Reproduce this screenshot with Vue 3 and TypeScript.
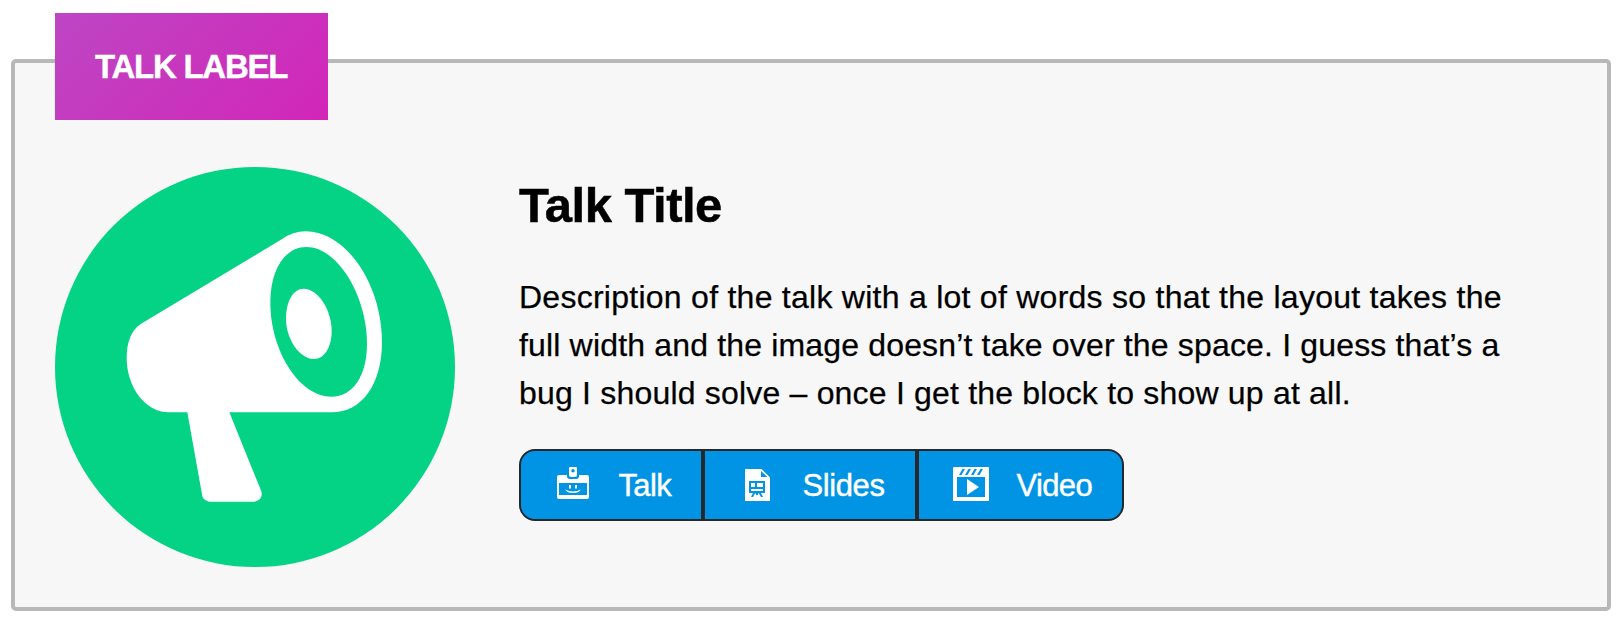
<script setup lang="ts">
const title = 'Talk Title'
const label = 'Talk Label'
const lines: string[] = [
  'Description of the talk with a lot of words so that the layout takes the',
  'full width and the image doesn’t take over the space. I guess that’s a',
  'bug I should solve – once I get the block to show up at all.',
]
</script>

<template>
  <article class="card">
    <div class="label"><span>{{ label }}</span></div>
    <div class="body">
      <svg class="avatar" viewBox="0 0 1200 1200" aria-hidden="true">
        <circle cx="600" cy="600" r="600" fill="#04d284" />
        <path
          fill="#fff"
          d="M257 471L680 217Q714 193 752 193C872 193 981 350 981 525C981 650 922 736 830 736H523L619 973Q625 999 599 1004H462Q442 1000 441 982L397 736H342C268 736 215 657 215 573Q215 500 257 471Z"
        />
        <path
          fill="#04d284"
          d="M754 240C850 240 936 390 936 530C936 625 894 689 829 689C734 689 646 555 646 405C646 308 690 240 754 240Z"
        />
        <path
          fill="#fff"
          d="M746 365C790 365 830 430 830 492C830 540 808 576 777 576C733 576 693 515 693 455C693 402 715 365 746 365Z"
        />
      </svg>
      <div class="content">
        <h2 class="title"><span>{{ title }}</span></h2>
        <p class="description">
          <span v-for="(line, i) in lines" :key="i" class="line" :class="`line-${i + 1}`">{{ line }}</span>
        </p>
        <nav class="links">
          <a class="link link-talk">
            <svg class="icon" viewBox="0 0 36 36" aria-hidden="true">
              <path
                fill="#fff"
                fill-rule="evenodd"
                d="M15 1H21Q22 1 22 2V9Q22 11 20 11H16Q14 11 14 9V2Q14 1 15 1ZM18 3A1.8 1.8 0 1 0 18 6.6A1.8 1.8 0 1 0 18 3ZM4 9H12V10Q12 13 15 13H21Q24 13 24 10V9H32Q34 9 34 11V31Q34 33 32 33H4Q2 33 2 31V11Q2 9 4 9ZM4 17V29H32V17Z"
              />
              <path fill="#fff" d="M14 19H16V22.5H14ZM20 19H22V22.5H20ZM10 23.5Q18 27.4 26 23.5Q24 27 18 27Q12 27 10 23.5Z" />
            </svg>
            <span>Talk</span>
          </a>
          <a class="link link-slides">
            <svg class="icon" viewBox="0 0 36 36" aria-hidden="true">
              <path fill="#fff" fill-rule="evenodd" d="M6 3H22.5L31 11.5V35H6ZM22 5V11H28.5Z" />
              <path
                fill="#0294e4"
                fill-rule="evenodd"
                d="M10 15H26V27H22L24 31H22L20 27.5H19V29H17V27.5H16L14 31H12L14 27H10ZM12 17V21H16V17ZM18 17V21H24V17ZM12 23V25H24V23Z"
              />
            </svg>
            <span>Slides</span>
          </a>
          <a class="link link-video">
            <svg class="icon" viewBox="0 0 36 36" aria-hidden="true">
              <path
                fill="#fff"
                fill-rule="evenodd"
                d="M1 1H35Q36 1 36 2V35H0V2Q0 1 1 1ZM4 11V31H32V11ZM6 9H8.5L12 3H9.5ZM12 9H14.5L18 3H15.5ZM18 9H20.5L24 3H21.5ZM24 9H26.5L30 3H27.5Z"
              />
              <path fill="#fff" d="M14 13L26 21L14 29Z" />
            </svg>
            <span>Video</span>
          </a>
        </nav>
      </div>
    </div>
  </article>
</template>

<style>
body {
  margin: 0;
  background: #fff;
}
</style>

<style scoped>
.card {
  box-sizing: border-box;
  width: 1600px;
  height: 552px;
  margin: 59px 0 0 11px;
  padding: 0 40px;
  border: 4px solid #b8b8b8;
  border-radius: 5px;
  background: #f7f7f7;
  font-family: "Liberation Sans", Arial, sans-serif;
  color: #000;
  display: flow-root;
}
.label {
  box-sizing: border-box;
  width: 273px;
  height: 107px;
  margin-top: -50px;
  padding-left: 40px;
  background: linear-gradient(135deg, #bd46c3, #d226b8);
  color: #fff;
  font-size: 33px;
  font-weight: 700;
  line-height: 108px;
  letter-spacing: -1.25px;
  -webkit-text-stroke: 0.4px #fff;
  text-transform: uppercase;
  white-space: nowrap;
}
.body {
  display: flex;
  gap: 64px;
  margin-top: 47px;
}
.avatar {
  width: 400px;
  height: 400px;
  flex: none;
}
.content {
  flex: 1;
  min-width: 0;
}
.title {
  margin: 10px 0 0;
  font-size: 49px;
  line-height: 56px;
  letter-spacing: -0.5px;
  -webkit-text-stroke: 0.5px #000;
}
.description {
  margin: 40px 0 0;
  font-size: 32px;
  line-height: 48px;
  -webkit-text-stroke: 0.25px #000;
}
.line {
  display: block;
  width: max-content;
  white-space: nowrap;
}
.line-1 {
  letter-spacing: 0.26px;
}
.line-2 {
  letter-spacing: 0.165px;
}
.line-3 {
  letter-spacing: 0.195px;
}
.links {
  display: flex;
  margin-top: 32px;
}
.link {
  box-sizing: border-box;
  height: 72px;
  display: flex;
  align-items: center;
  gap: 27.5px;
  padding-left: 34px;
  border: 2px solid #23282d;
  background: #0294e4;
  color: #fff;
  font-size: 31px;
  letter-spacing: -0.65px;
}
.link span {
  padding-top: 2px;
  -webkit-text-stroke: 0.4px #fff;
}
.link-talk {
  width: 184px;
  border-radius: 16px 0 0 16px;
}
.link-slides {
  width: 214px;
  letter-spacing: -0.4px;
}
.link-video {
  width: 207px;
  border-radius: 0 16px 16px 0;
}
.icon {
  width: 36px;
  height: 36px;
  flex: none;
  margin-bottom: 2px;
}
</style>
